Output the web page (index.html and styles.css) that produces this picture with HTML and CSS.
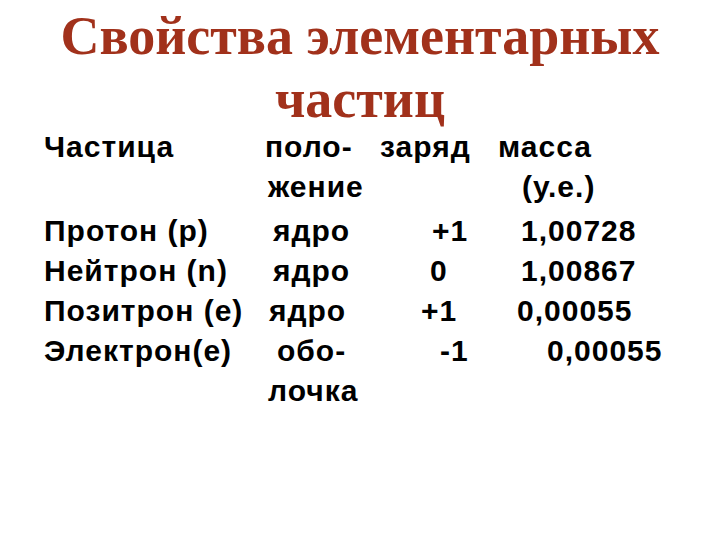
FILE: index.html
```html
<!DOCTYPE html>
<html lang="ru">
<head>
<meta charset="utf-8">
<title>Свойства элементарных частиц</title>
<link rel="stylesheet" href="styles.css">
</head>
<body>
<main class="slide">
  <h1 class="title">Свойства элементарных<br>частиц</h1>
  <div class="table">
    <div class="row">
      <span class="cell">Частица</span>
      <span class="cell">поло-</span>
      <span class="cell i3">заряд</span>
      <span class="cell i5">масса</span>
    </div>
    <div class="row">
      <span class="cell"></span>
      <span class="cell i3">жение</span>
      <span class="cell"></span>
      <span class="cell i29">(у.е.)</span>
    </div>
    <div class="row gap">
      <span class="cell">Протон (р)</span>
      <span class="cell i8">ядро</span>
      <span class="cell i55">+1</span>
      <span class="cell i28">1,00728</span>
    </div>
    <div class="row">
      <span class="cell">Нейтрон (n)</span>
      <span class="cell i8">ядро</span>
      <span class="cell i53">0</span>
      <span class="cell i28">1,00867</span>
    </div>
    <div class="row">
      <span class="cell">Позитрон (е)</span>
      <span class="cell i4">ядро</span>
      <span class="cell i44">+1</span>
      <span class="cell i24">0,00055</span>
    </div>
    <div class="row">
      <span class="cell">Электрон(е)</span>
      <span class="cell i12">обо-</span>
      <span class="cell i63">-1</span>
      <span class="cell i54">0,00055</span>
    </div>
    <div class="row">
      <span class="cell"></span>
      <span class="cell i3">лочка</span>
      <span class="cell"></span>
      <span class="cell"></span>
    </div>
  </div>
</main>
</body>
</html>
```

FILE: styles.css
```css
html, body {
  margin: 0;
  padding: 0;
  background: #ffffff;
}

.slide {
  width: 720px;
  height: 540px;
  box-sizing: border-box;
  padding-top: 5px;
}

.title {
  margin: 0 0 -4px 0;
  text-align: center;
  font-family: "Liberation Serif", "Times New Roman", serif;
  font-weight: bold;
  font-size: 54px;
  line-height: 63px;
  color: #a1311b;
}

.table {
  padding-left: 44px;
  font-family: "Liberation Sans", Arial, sans-serif;
  font-weight: bold;
  font-size: 30px;
  line-height: 40px;
  letter-spacing: 1px;
  color: #000000;
}

.row {
  display: grid;
  grid-template-columns: 221px 112px 116px auto;
  white-space: nowrap;
}

.row.gap {
  margin-top: 4px;
}

.cell {
  display: block;
}

.i3 { padding-left: 3px; }
.i4 { padding-left: 4px; }
.i5 { padding-left: 5px; }
.i8 { padding-left: 8px; }
.i12 { padding-left: 12px; }
.i24 { padding-left: 24px; }
.i28 { padding-left: 28px; }
.i29 { padding-left: 29px; }
.i44 { padding-left: 44px; }
.i53 { padding-left: 53px; }
.i54 { padding-left: 54px; }
.i55 { padding-left: 55px; }
.i63 { padding-left: 63px; }
```
